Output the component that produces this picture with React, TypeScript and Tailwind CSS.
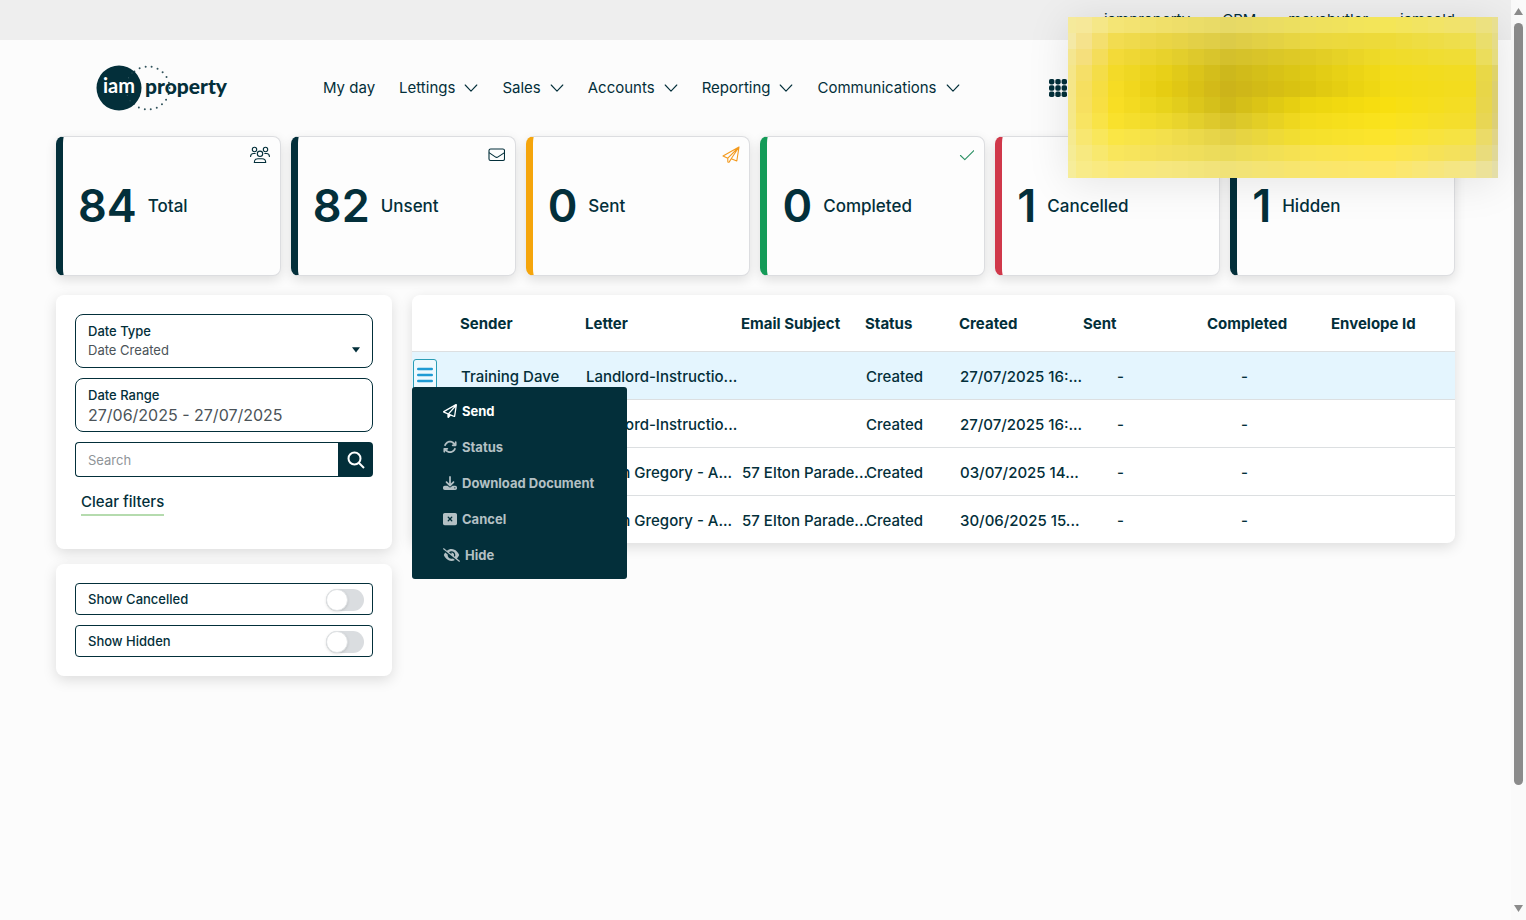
import type { ReactNode } from "react";
import {
  FaArrowsRotate,
  FaDownload,
  FaEyeSlash,
  FaRectangleXmark,
  FaRegPaperPlane,
} from "react-icons/fa6";

const topLinks = ["iamproperty", "CRM", "movebutler", "iamsold"];

const navItems = [
  { label: "My day", menu: false },
  { label: "Lettings", menu: true },
  { label: "Sales", menu: true },
  { label: "Accounts", menu: true },
  { label: "Reporting", menu: true },
  { label: "Communications", menu: true },
];

const PeopleIcon = () => (
  <svg className="h-5 w-5" viewBox="0 0 20 20" fill="none" stroke="currentColor" strokeWidth={1.1} strokeLinecap="round" strokeLinejoin="round">
    <circle cx="4.5" cy="4.5" r="2.2" />
    <circle cx="15.5" cy="4.5" r="2.2" />
    <circle cx="10" cy="8.8" r="2.7" />
    <path d="M.6 11.500c0-2 1.300-3 3-3h1.600M19.400 11.500c0-2-1.300-3-3-3h-1.600" />
    <path d="M4.300 17.500c0-2.300 1.600-3.800 3.700-3.800h4c2.100 0 3.700 1.500 3.700 3.800z" />
  </svg>
);

const EnvelopeIcon = () => (
  <svg className="h-5 w-5" viewBox="-2 0 20 20" fill="none" stroke="currentColor" strokeWidth={1.1} strokeLinejoin="round">
    <rect x="2" y="4" width="15.500" height="11.500" rx="1.600" />
    <path d="M2 7.600l6.300 4.300c.9.600 1.900.6 2.800 0l6.400-4.300" />
  </svg>
);

const PlaneIcon = () => (
  <svg className="h-5 w-5 overflow-visible" viewBox="-2 0 20 20" fill="none" stroke="currentColor" strokeWidth={1.1} strokeLinejoin="round" strokeLinecap="round">
    <path d="M18 2L2 11l4.800 2.200L18 2l-2.200 14-5.600-2.300L18 2M6.800 13.200v3.200c0 .9 1 1.200 1.500.5l1.900-3.200" />
  </svg>
);

const CheckIcon = () => (
  <svg className="h-5 w-5" viewBox="-3 0 20 20" fill="none" stroke="currentColor" strokeWidth={1.1} strokeLinecap="round" strokeLinejoin="round">
    <path d="M3.500 10.500l4.300 4.200 9-9" />
  </svg>
);

const ChevronIcon = () => (
  <svg className="h-2 w-[14px]" viewBox="0 0 14 8" fill="none" stroke="currentColor" strokeWidth={1.1} strokeLinecap="round" strokeLinejoin="round">
    <path d="M1.200 1L7 7.200 12.800 1" />
  </svg>
);

const stats: { value: number; label: string; bar: string; tint: string; icon?: ReactNode }[] = [
  { value: 84, label: "Total", bar: "border-l-[#032f3a]", tint: "text-[#032f3a]", icon: <PeopleIcon /> },
  { value: 82, label: "Unsent", bar: "border-l-[#032f3a]", tint: "text-[#032f3a]", icon: <EnvelopeIcon /> },
  { value: 0, label: "Sent", bar: "border-l-[#f5a50c]", tint: "text-[#f39a1e]", icon: <PlaneIcon /> },
  { value: 0, label: "Completed", bar: "border-l-[#149b58]", tint: "text-[#2c9164]", icon: <CheckIcon /> },
  { value: 1, label: "Cancelled", bar: "border-l-[#d0384a]", tint: "text-[#d0384a]" },
  { value: 1, label: "Hidden", bar: "border-l-[#032f3a]", tint: "text-[#032f3a]" },
];

const rows = [
  { sender: "Training Dave", letter: "Landlord-Instructio...", subject: "", created: "27/07/2025 16:..." },
  { sender: "", letter: "Landlord-Instructio...", subject: "", created: "27/07/2025 16:..." },
  { sender: "", letter: "Susan Gregory - A...", subject: "57 Elton Parade...", created: "03/07/2025 14..." },
  { sender: "", letter: "Susan Gregory - A...", subject: "57 Elton Parade...", created: "30/06/2025 15..." },
];

const menuItems = [
  { label: "Send", icon: <FaRegPaperPlane className="h-[14px] w-[14px]" />, enabled: true },
  { label: "Status", icon: <FaArrowsRotate className="h-[14px] w-[14px]" />, enabled: false },
  { label: "Download Document", icon: <FaDownload className="h-[14px] w-[14px]" />, enabled: false },
  { label: "Cancel", icon: <FaRectangleXmark className="h-[14px] w-[14px]" />, enabled: false },
  { label: "Hide", icon: <FaEyeSlash className="h-[14px] w-[17px]" />, enabled: false },
];

// Colour stops of the pixelated note, one line per mosaic row.
const stops = [0, 1, 3, 6, 10, 15, 20, 25, 27];
const mosaic = [
  "f5ea9b f6e899 f4e575 f0e06a e6d966 eee05f f4e657 f0e270 e8df90",
  "f4e9a5 f5e28c f2dc50 ead545 dccb48 ead740 eedb38 eedf50 e5dc88",
  "f4e690 f5df7c f3da38 e8d22c d4c02c e0cb24 f0dc28 f0dd38 e5dc80",
  "f5e688 f5df68 f3da28 e8d018 cdb81c dfc914 f3dc18 f2dc24 dfd36a",
  "f5e688 f6df60 f6dc24 e6cd12 ccb41a dcc510 f3dc14 f3dc20 dccf70",
  "f5e788 f7e060 f8de24 e8d31c cfb91a ecd510 f8df10 f3dd28 dccf70",
  "f5e888 f8e462 f9e12c eed92c d8c42c f3dc1c fbe31c f3dd30 dccf78",
  "f5ea90 f8e770 fae645 f3e04c e3d148 f5e02c fce52c f5e248 e0d488",
  "f5ec95 f7e980 f9e65c f3e05c eadb5a f8e350 fde64a f2e060 e0d898",
  "f6ed9a f8eb88 fae978 f6e77e f0e278 f9e66c fde768 f3e68a e4dea8",
].map((line) => line.split(" "));

function tileColor(row: number, col: number) {
  let i = 0;
  while (i < stops.length - 2 && stops[i + 1] <= col) i++;
  const t = (col - stops[i]) / (stops[i + 1] - stops[i]);
  const channel = (hex: string, n: number) => parseInt(hex.slice(n * 2, n * 2 + 2), 16);
  const mix = [0, 1, 2].map((n) => {
    const a = channel(mosaic[row][i], n);
    const b = channel(mosaic[row][i + 1], n);
    return Math.round(a + (b - a) * t);
  });
  return `rgb(${mix.join(",")})`;
}

function PixelNote() {
  const tiles: ReactNode[] = [];
  for (let r = 0; r < 10; r++) {
    for (let c = 0; c < 28; c++) {
      tiles.push(
        <rect key={`${r}-${c}`} x={c * 16 - 8} y={r * 16} width={16} height={r === 9 ? 18 : 16} fill={tileColor(r, c)} />
      );
    }
  }
  return (
    <div className="absolute top-[17px] right-[13px] z-20 h-[161px] w-[430px] shadow-[0_4px_40px_rgba(0,0,0,0.1)]">
      <svg className="h-full w-full" viewBox="0 0 430 161" preserveAspectRatio="none" shapeRendering="crispEdges" aria-hidden="true">
        {tiles}
      </svg>
    </div>
  );
}

function Logo() {
  return (
    <a href="#" aria-label="iam property" className="shrink-0">
      <svg className="h-12 w-[132px]" viewBox="0 0 132 48">
        <circle cx="52" cy="24" r="21.500" fill="none" stroke="#32535c" strokeWidth="2" strokeDasharray="0 6.140" strokeLinecap="round" />
        <circle cx="23" cy="24" r="22.500" fill="#032f3a" />
        <path d="M36 9a21.500 21.500 0 0 0 0 30" fill="none" stroke="#4d6a72" strokeWidth="1" strokeDasharray="0 6" strokeLinecap="round" />
        <text x="7" y="29" fontSize="20" fontWeight="700" fill="#fff" fontFamily="Lato, sans-serif">iam</text>
        <text x="49" y="30" fontSize="21" fontWeight="900" fill="#032f3a" fontFamily="Lato, sans-serif">property</text>
      </svg>
    </a>
  );
}

function Header() {
  return (
    <header>
      <div className="flex h-10 items-center justify-end gap-8 bg-[#eeeeee] px-14 text-[15px]">
        {topLinks.map((link) => (
          <a key={link} href="#">{link}</a>
        ))}
      </div>
      <div className="flex h-24 items-center pr-14 pl-24">
        <Logo />
        <nav className="ml-[95px] flex items-center gap-6 text-[15px]">
          {navItems.map((item) => (
            <a key={item.label} href="#" className="flex items-center gap-[9px] whitespace-nowrap">
              {item.label}
              {item.menu && <ChevronIcon />}
            </a>
          ))}
        </nav>
        <button type="button" aria-label="Apps" className="ml-[89px]">
          <svg className="h-[18px] w-[18px]" viewBox="0 0 18 18" fill="currentColor">
            {[0, 6.3, 12.6].map((y) =>
              [0, 6.3, 12.6].map((x) => <rect key={`${x}-${y}`} x={x} y={y} width="5.400" height="5.400" rx="1.800" />)
            )}
          </svg>
        </button>
      </div>
    </header>
  );
}

function Toggle({ id, label }: { id: string; label: string }) {
  return (
    <label htmlFor={id} className="flex h-8 items-center justify-between rounded border border-[#032f3a] pt-[2px] pr-2 pl-3 text-[13px] font-medium">
      {label}
      <input
        id={id}
        type="checkbox"
        role="switch"
        className="h-[22px] w-[38px] appearance-none rounded-full bg-[#dadde0] before:block before:h-[22px] before:w-[22px] before:rounded-full before:border before:border-[#dfe2e4] before:bg-white before:shadow checked:bg-[#149b58] checked:before:ml-4"
      />
    </label>
  );
}

function Filters() {
  return (
    <aside className="flex w-[336px] shrink-0 flex-col gap-[15px]">
      <form className="flex h-[254px] flex-col gap-[10px] rounded-lg bg-white p-[19px] shadow-[0_4px_14px_rgba(0,0,0,0.13)]">
        <div className="relative flex h-[54px] flex-col rounded-lg border border-[#032f3a] px-3 pt-[7px]">
          <label htmlFor="date-type" className="text-[13px] leading-[18px] font-medium">Date Type</label>
          <select id="date-type" className="appearance-none text-[13px] leading-5 text-[#4b5358]">
            <option>Date Created</option>
          </select>
          <svg className="pointer-events-none absolute right-3 bottom-[14px] h-[6px] w-2" viewBox="0 0 8 6" fill="currentColor">
            <path d="M0 .3h8L4 5.500z" />
          </svg>
        </div>
        <div className="flex h-[54px] flex-col rounded-lg border border-[#032f3a] px-3 pt-[7px]">
          <label htmlFor="date-range" className="text-[13px] leading-[18px] font-medium">Date Range</label>
          <input id="date-range" type="text" defaultValue="27/06/2025 - 27/07/2025" className="text-base leading-[22px] text-[#4b5358]" />
        </div>
        <div className="flex h-[35px]">
          <input
            type="search"
            aria-label="Search"
            placeholder="Search"
            className="min-w-0 flex-1 rounded-l border border-r-0 border-[#032f3a] px-3 pt-[2px] text-[13px] placeholder:text-[#8f9498]"
          />
          <button type="button" aria-label="Run search" className="flex w-[35px] items-center justify-center rounded-r-sm bg-[#032f3a] text-white">
            <svg className="h-[18px] w-[18px]" viewBox="0 0 18 18" fill="none" stroke="currentColor" strokeWidth={2}>
              <circle cx="7.500" cy="7.500" r="6" />
              <path d="M12 12l5 5" />
            </svg>
          </button>
        </div>
        <a href="#" className="mt-[3px] ml-[6px] self-start border-b-2 border-[#b5dbae] text-[15px] leading-6 font-medium">
          Clear filters
        </a>
      </form>
      <div className="flex flex-col gap-[10px] rounded-lg bg-white p-[19px] shadow-[0_4px_14px_rgba(0,0,0,0.13)]">
        <Toggle id="show-cancelled" label="Show Cancelled" />
        <Toggle id="show-hidden" label="Show Hidden" />
      </div>
    </aside>
  );
}

function RowMenu() {
  return (
    <div className="relative h-[34px] w-6">
      <button
        type="button"
        aria-label="Row actions"
        className="ml-px flex h-8 w-6 items-center justify-center rounded-[3px] border border-[#2a9db5] bg-[#eef9fe] text-[#1f9bd4]"
      >
        <svg className="h-4 w-4" viewBox="0 0 16 16" stroke="currentColor" strokeWidth={2.4} strokeLinecap="round">
          <path d="M1.200 2h13.600M1.200 8h13.600M1.200 14h13.600" />
        </svg>
      </button>
      <ul className="absolute top-7 left-0 z-10 w-[215px] rounded-[3px] bg-[#032f3a] py-[6px]">
        {menuItems.map((item) => (
          <li key={item.label}>
            <button
              type="button"
              disabled={!item.enabled}
              className="flex h-9 w-full items-center gap-[5px] pl-[31px] text-[13px] font-bold whitespace-nowrap text-white disabled:text-[#b3c0c4]"
            >
              {item.icon}
              <span className="pt-[3px]">{item.label}</span>
            </button>
          </li>
        ))}
      </ul>
    </div>
  );
}

function LettersTable() {
  return (
    <div className="min-w-0 flex-1 self-start rounded-lg bg-white shadow-[0_4px_14px_rgba(0,0,0,0.13)]">
      <table className="w-full table-fixed text-left text-[15px]">
        <colgroup>
          <col className="w-12" />
          <col className="w-[125px]" />
          <col className="w-[156px]" />
          <col className="w-[124px]" />
          <col className="w-[94px]" />
          <col />
          <col />
          <col />
          <col />
        </colgroup>
        <thead>
          <tr className="h-14 font-bold *:pt-[2px]">
            <th aria-label="Actions" />
            <th>Sender</th>
            <th>Letter</th>
            <th>Email Subject</th>
            <th>Status</th>
            <th>Created</th>
            <th>Sent</th>
            <th>Completed</th>
            <th>Envelope Id</th>
          </tr>
        </thead>
        <tbody>
          {rows.map((row, i) => (
            <tr key={i} className="h-12 border-t border-[#dcdfe1] font-medium whitespace-nowrap *:pt-1 first:bg-[#e4f5fe]">
              <td className="align-top">{i === 0 && <div className="pt-[3px]"><RowMenu /></div>}</td>
              <td className="pl-px">{row.sender}</td>
              <td className="pl-px">{row.letter}</td>
              <td className="pl-px">{row.subject}</td>
              <td className="pl-px">Created</td>
              <td className="pl-px">{row.created}</td>
              <td className="pl-[34px]">-</td>
              <td className="pl-[34px]">-</td>
              <td />
            </tr>
          ))}
        </tbody>
      </table>
    </div>
  );
}

export default function App() {
  return (
    <div className="flex min-h-screen bg-[#fcfcfc] font-['Inter',sans-serif] text-base text-[#032f3a]">
      <div className="relative min-w-0 flex-1">
        <Header />
        <main className="px-14">
          <div className="grid grid-cols-6 gap-[10px]">
            {stats.map((stat) => (
              <section
                key={stat.label}
                className={`relative flex h-[140px] items-center gap-[11px] rounded-lg border border-l-[7px] border-[#dcdde0] bg-[#fdfdfd] pl-[15px] shadow-[0_4px_12px_rgba(0,0,0,0.12)] ${stat.bar}`}
              >
                <span className="text-[45px] font-semibold">{stat.value}</span>
                <span className="pt-[2px] text-[17px] font-medium">{stat.label}</span>
                <span className={`absolute top-2 right-[10px] ${stat.tint}`}>{stat.icon}</span>
              </section>
            ))}
          </div>
          <div className="mt-[19px] flex gap-5">
            <Filters />
            <LettersTable />
          </div>
        </main>
        <PixelNote />
      </div>
      <div className="flex w-[15px] shrink-0 flex-col items-center justify-between bg-[#fafafa] py-2" aria-hidden="true">
        <div className="flex flex-1 flex-col items-center gap-2">
          <svg className="h-[7px] w-[9px]" viewBox="0 0 9 7" fill="#8b8b8b"><path d="M4.500 0L9 7H0z" /></svg>
          <div className="h-[85%] w-[9px] rounded-full bg-[#8b8b8b]" />
        </div>
        <svg className="h-[7px] w-[9px]" viewBox="0 0 9 7" fill="#8b8b8b"><path d="M4.500 7L0 0h9z" /></svg>
      </div>
    </div>
  );
}
